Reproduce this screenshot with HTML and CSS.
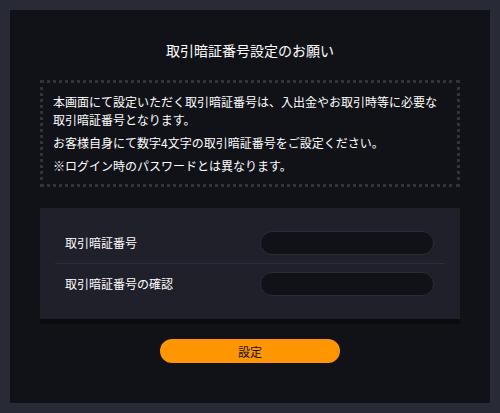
FILE: index.html
```html
<!DOCTYPE html>
<html lang="ja">
<head>
<meta charset="utf-8">
<title>取引暗証番号設定のお願い</title>
<link rel="stylesheet" href="styles.css">
</head>
<body>
<main class="panel">
  <h1 class="title">取引暗証番号設定のお願い</h1>
  <section class="notice">
    <p>本画面にて設定いただく取引暗証番号は、入出金やお取引時等に必要な取引暗証番号となります。</p>
    <p>お客様自身にて数字4文字の取引暗証番号をご設定ください。</p>
    <p>※ログイン時のパスワードとは異なります。</p>
  </section>
  <form class="card">
    <div class="row">
      <label class="label">取引暗証番号</label>
      <input class="field" type="password">
    </div>
    <div class="row">
      <label class="label">取引暗証番号の確認</label>
      <input class="field" type="password">
    </div>
  </form>
  <div class="actions">
    <button class="btn" type="button">設定</button>
  </div>
</main>
</body>
</html>
```

FILE: styles.css
```css
html, body {
  margin: 0;
  padding: 0;
}
body {
  background: #282a36;
  padding: 10px;
  font-family: "Noto Sans CJK JP", "Noto Sans", sans-serif;
  color: #ffffff;
  box-sizing: border-box;
  height: 413px;
}
.panel {
  background: #111218;
  height: 393px;
  box-sizing: border-box;
  padding: 30px 30px 0;
}
.title {
  margin: 0;
  font-size: 14px;
  font-weight: normal;
  line-height: 20px;
  text-align: center;
}
.notice {
  margin-top: 20px;
  border: 3px dotted #30323c;
  padding: 5px 10px 9px;
  font-size: 12px;
  line-height: 18px;
}
.notice p {
  margin: 5px 0 0;
}
.card {
  margin-top: 21px;
  background: #1f2029;
  padding: 15px;
  box-shadow: 0 5px 0 #0b0c0f;
}
.row {
  display: flex;
  align-items: center;
  justify-content: space-between;
  padding: 8px 11px 8px 10px;
}
.row + .row {
  border-top: 1px solid #2b2d38;
}
.label {
  font-size: 12px;
  line-height: 18px;
}
.field {
  width: 174px;
  height: 24px;
  box-sizing: border-box;
  border: 1px solid #2a2c37;
  border-radius: 12px;
  background: #111218;
  color: #fff;
  outline: none;
  padding: 0 10px;
}
.actions {
  display: flex;
  justify-content: center;
  margin-top: 20px;
}
.btn {
  width: 180px;
  height: 24px;
  border: none;
  border-radius: 12px;
  background: #ff9500;
  color: #111;
  font-family: "Noto Sans CJK JP", "Noto Sans", sans-serif;
  font-size: 12px;
  padding: 0;
}
```
